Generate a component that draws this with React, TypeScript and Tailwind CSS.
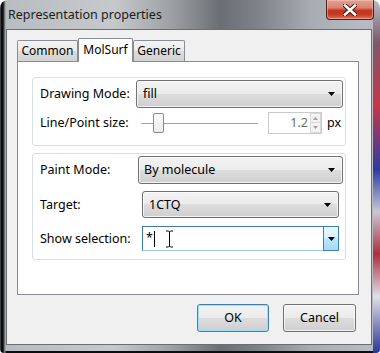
import React from "react";

function Arrow() {
  return (
    <svg width="7" height="4" viewBox="0 0 7 4" className="shrink-0">
      <path d="M0 0h7L3.5 4z" fill="#000" />
    </svg>
  );
}

function Combo({ text, className }: { text: string; className: string }) {
  return (
    <div
      className={
        "flex items-center rounded-[3px] border border-[#707070] bg-[linear-gradient(180deg,#f3f3f3_0%,#ebebeb_50%,#dddddd_50%,#cfcfcf_100%)] shadow-[inset_0_0_0_1px_rgba(255,255,255,0.75)] " +
        className
      }
    >
      <span className="flex-1">{text}</span>
      <span className="pr-[7px]">
        <Arrow />
      </span>
    </div>
  );
}

function Tab({ label, selected, className }: { label: string; selected?: boolean; className: string }) {
  return (
    <div
      className={
        "flex items-center justify-center border border-b-0 border-[#898c95] rounded-t-[2px] text-[12px] " +
        (selected
          ? "bg-white relative z-10 -mb-px "
          : "bg-[linear-gradient(180deg,#f3f3f3_0%,#ebebeb_50%,#dddddd_50%,#d2d2d2_100%)] ") +
        className
      }
    >
      {label}
    </div>
  );
}

export default function App() {
  return (
    <div className="w-[380px] h-[353px] flex flex-col rounded-t-[8px] rounded-b-[4px] overflow-hidden font-['Noto_Sans',sans-serif] text-[12.5px] leading-[18px] text-black [background:linear-gradient(90deg,#6a6e72_0px,#0e0e0e_1px,#0e0e0e_3px,#8d9195_5px,transparent_6px),linear-gradient(180deg,#b9bcc6_0%,#7a5a6a_12%,#c23848_30%,#2d3c9e_48%,#c8c8d4_60%,#a9303c_72%,#e0e0e8_84%,#2b3590_100%)_right_top/7px_100%_no-repeat,linear-gradient(0deg,#0d0d0d_0px,#0d0d0d_2px,transparent_2px),linear-gradient(90deg,#b8bcc0_0%,#c6c9cc_30%,#9da1a6_45%,#6a6f75_58%,#7e838a_68%,#a8adb3_82%,#b7bac2_96%)]">
      {/* Title bar */}
      <div className="h-[29px] shrink-0 flex items-start">
        <div className="pl-[8px] pt-[6px] text-[12.5px] text-[#1b1b1b]">Representation properties</div>
        <div className="ml-auto mr-[6px] w-[48px] h-[20px] rounded-b-[4px] border border-t-0 border-[#4b1f1a] bg-[linear-gradient(180deg,#e3a192_0%,#d88472_40%,#c7351f_55%,#c2381f_75%,#dd7457_100%)] shadow-[inset_0_0_0_1px_rgba(255,210,200,0.45)] flex items-center justify-center">
          <svg width="14" height="12" viewBox="0 0 14 12">
            <path d="M2 1.5L12 10.5M12 1.5L2 10.5" stroke="#3a1410" strokeWidth="4.4" strokeLinecap="square" />
            <path d="M2 1.5L12 10.5M12 1.5L2 10.5" stroke="#ffffff" strokeWidth="2.6" strokeLinecap="square" />
          </svg>
        </div>
      </div>

      {/* Client area */}
      <div className="ml-[6px] w-[366px] h-[316px] shrink-0 border border-[#6b6f73] bg-[#f0f0f0] flex flex-col">
        {/* Tabs */}
        <div className="ml-[10px] mt-[8px] h-[23px] flex items-end">
          <Tab label="Common" className="w-[61px] h-[21px]" />
          <Tab label="MolSurf" selected className="w-[55px] h-[24px] pb-[2px]" />
          <Tab label="Generic" className="w-[52px] h-[21px]" />
        </div>

        {/* Pane */}
        <div className="ml-[10px] w-[342px] h-[234px] border border-[#898c95] bg-white flex flex-col">
          {/* Group 1 */}
          <div className="ml-[14px] mt-[15px] w-[314px] h-[69px] border border-[#d5dfe5] rounded-[3px] flex flex-col">
            <div className="mt-[2px] h-[28px] flex items-center">
              <div className="pl-[7px] w-[103px]">Drawing Mode:</div>
              <Combo text="fill" className="w-[207px] h-[28px] pl-[6px]" />
            </div>
            <div className="mt-[4px] h-[22px] flex items-center">
              <div className="pl-[7px] w-[103px]">Line/Point size:</div>
              <div className="ml-[5px] w-[117px] h-[22px] flex items-center">
                <div className="w-[12px] h-px bg-[#a6a6a6]" />
                <div className="w-[11px] h-[20px] rounded-[2px] border border-[#8a8a8a] bg-[linear-gradient(180deg,#fafafa_0%,#ececec_100%)]" />
                <div className="flex-1 h-px bg-[#a6a6a6]" />
              </div>
              <div className="ml-[10px] w-[54px] h-[22px] border border-[#c9cacc] bg-white flex items-center">
                <span className="flex-1 text-right pr-[2px] text-[#6d6d6d]">1.2</span>
                <div className="w-[11px] h-[20px] flex flex-col">
                  <div className="h-[10px] border border-[#d8d8d8] bg-[#f4f4f4] flex items-center justify-center">
                    <svg width="5" height="3" viewBox="0 0 5 3"><path d="M0 3h5L2.5 0z" fill="#a0a0a0" /></svg>
                  </div>
                  <div className="h-[10px] border border-t-0 border-[#d8d8d8] bg-[#f4f4f4] flex items-center justify-center">
                    <svg width="5" height="3" viewBox="0 0 5 3"><path d="M0 0h5L2.5 3z" fill="#a0a0a0" /></svg>
                  </div>
                </div>
              </div>
              <div className="ml-[5px]">px</div>
            </div>
          </div>

          {/* Group 2 */}
          <div className="ml-[14px] mt-[7px] w-[314px] h-[107px] border border-[#d5dfe5] rounded-[3px] flex flex-col">
            <div className="mt-[2px] h-[28px] flex items-center">
              <div className="pl-[7px] w-[105px]">Paint Mode:</div>
              <Combo text="By molecule" className="w-[205px] h-[28px] pl-[5px]" />
            </div>
            <div className="mt-[7px] h-[27px] flex items-center">
              <div className="pl-[7px] w-[109px]">Target:</div>
              <Combo text="1CTQ" className="w-[197px] h-[27px] pl-[6px]" />
            </div>
            <div className="mt-[8px] h-[25px] flex items-center">
              <div className="pl-[7px] w-[109px]">Show selection:</div>
              <div className="relative w-[197px] h-[25px] border border-[#3d7bad] border-b-[#a4c9e3] bg-white flex items-center">
                <span className="pl-[3px] leading-none">*</span>
                <span className="ml-[1px] w-px h-[16px] bg-black" />
                <svg className="absolute left-[22px] top-[3px]" width="9" height="18" viewBox="0 0 9 18">
                  <path d="M1 1h2.5L4.5 2L5.5 1H8M4.5 2v14M1 17h2.5L4.5 16L5.5 17H8" fill="none" stroke="#000" strokeWidth="1" />
                </svg>
                <div className="ml-auto w-[16px] h-[25px] -mr-px border border-[#3c7fb1] bg-[linear-gradient(180deg,#eaf6fd_0%,#d9f0fc_50%,#bee6fd_50%,#a7d9f5_100%)] flex items-center justify-center">
                  <Arrow />
                </div>
              </div>
            </div>
          </div>
        </div>

        {/* Buttons */}
        <div className="mt-[9px] flex">
          <div className="ml-[190px] w-[72px] h-[28px] rounded-[3px] border border-[#3c7fb1] bg-[linear-gradient(180deg,#f2f2f2_0%,#ebebeb_50%,#dddddd_50%,#cfcfcf_100%)] shadow-[inset_0_0_0_1px_#9fe1fb] flex items-center justify-center">
            OK
          </div>
          <div className="ml-[14px] w-[73px] h-[28px] rounded-[3px] border border-[#707070] bg-[linear-gradient(180deg,#f2f2f2_0%,#ebebeb_50%,#dddddd_50%,#cfcfcf_100%)] shadow-[inset_0_0_0_1px_rgba(255,255,255,0.7)] flex items-center justify-center">
            Cancel
          </div>
        </div>
      </div>
    </div>
  );
}
